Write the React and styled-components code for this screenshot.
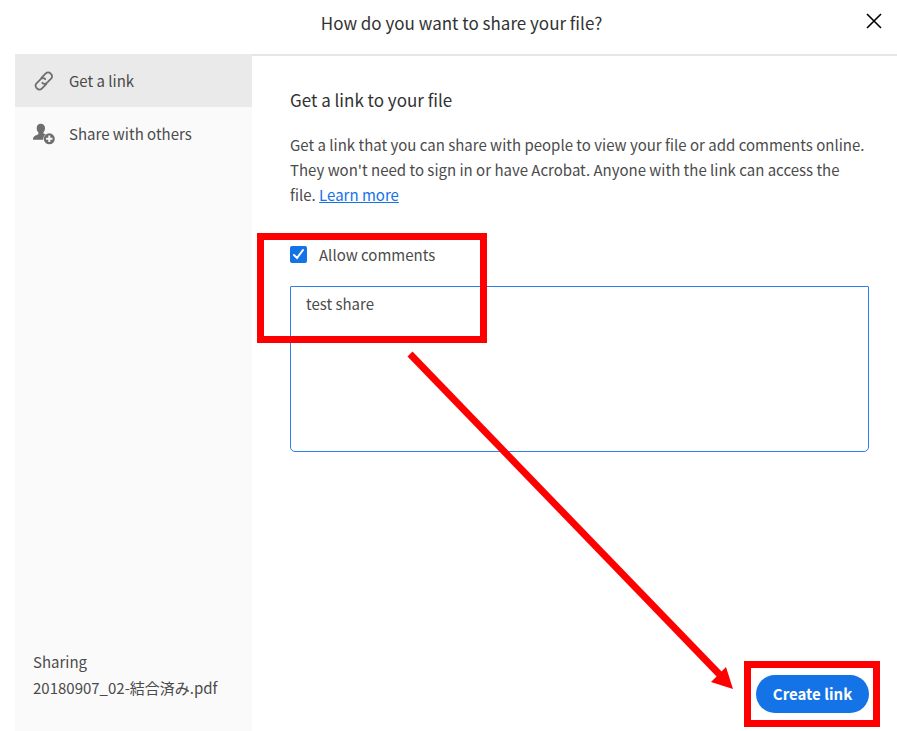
import React, { useState } from 'react';
import styled, { createGlobalStyle } from 'styled-components';

const GlobalStyle = createGlobalStyle`
    *, *::before, *::after {
        box-sizing: border-box;
    }
    body {
        margin: 0;
        background-color: #fff;
        color: #4b4b4b;
        font-family: "Noto Sans CJK JP", "Noto Sans", sans-serif;
        font-size: 15px;
        line-height: 25px;
    }
    button, textarea {
        font: inherit;
    }
`

const Dialog = styled.div`
    min-height: 100vh;
    padding-left: 15px;
    display: flex;
    flex-direction: column;
`

const Header = styled.header`
    height: 54px;
    padding: 0 11px 10px 0;
    display: grid;
    grid-template-columns: 46px 1fr 24px;
    align-items: center;
`

const Title = styled.h1`
    grid-column: 2;
    margin: 0;
    font-size: 17px;
    font-weight: 400;
    text-align: center;
    color: #323232;
`

const CloseButton = styled.button`
    width: 24px;
    height: 24px;
    padding: 0 0 2px;
    display: grid;
    place-items: center;
    border: 0;
    background: none;
    color: #000;
    cursor: pointer;
`

const Body = styled.div`
    flex: 1;
    display: flex;
`

const Sidebar = styled.aside`
    flex: 0 0 237px;
    padding-bottom: 30px;
    display: flex;
    flex-direction: column;
    justify-content: space-between;
    background-color: #fafafa;
`

const Menu = styled.nav`
    display: flex;
    flex-direction: column;
`

const MenuItem = styled.button`
    height: 53px;
    padding: 0 18px;
    display: flex;
    align-items: center;
    gap: 14px;
    border: 0;
    background-color: ${props => props.$active ? '#eaeaea' : 'transparent'};
    color: #4b4b4b;
    text-align: left;
    cursor: pointer;

    svg {
        color: #6e6e6e;
    }
`

const FileInfo = styled.div`
    padding: 0 18px;
    line-height: 26px;
`

const Main = styled.main`
    flex: 1;
    min-width: 0;
    padding: 31px 28px 18px 38px;
    display: flex;
    flex-direction: column;
    border-top: 2px solid #e6e6e6;
`

const Heading = styled.h2`
    margin: 0 0 20px;
    font-size: 17px;
    font-weight: 400;
    color: #323232;
`

const Description = styled.p`
    margin: 0 0 35px;
    padding-right: 3px;
`

const Link = styled.a`
    color: #1473e6;
    text-decoration: underline;
`

const Comments = styled.div`
    position: relative;
    display: flex;
    flex-direction: column;
    gap: 19px;
`

const CheckLabel = styled.label`
    display: flex;
    align-items: center;
    gap: 12px;
`

const Checkbox = styled.input`
    appearance: none;
    width: 17px;
    height: 17px;
    margin: 0;
    border: 2px solid #6e6e6e;
    border-radius: 2px;

    &:checked {
        border: 0;
        background: #1473e6 url("data:image/svg+xml,%3Csvg xmlns='http://www.w3.org/2000/svg' viewBox='0 0 17 17'%3E%3Cpath d='M4 9l3 3 6-8' fill='none' stroke='white' stroke-width='2' stroke-linecap='round'/%3E%3C/svg%3E");
    }
`

const Message = styled.textarea`
    width: 100%;
    height: 166px;
    padding: 4px 15px;
    display: block;
    resize: none;
    border: 1px solid #2c80e8;
    border-radius: 1px 1px 5px 5px;
    outline: 0;
    color: #4b4b4b;
`

const Footer = styled.footer`
    margin-top: auto;
    display: flex;
    justify-content: flex-end;
`

const CreateSpot = styled.div`
    position: relative;
`

const CreateButton = styled.button`
    min-width: 113px;
    height: 38px;
    padding: 0 16px 2px;
    border: 0;
    border-radius: 19px;
    background-color: #1473e6;
    color: #fff;
    font-weight: 700;
    white-space: nowrap;
    cursor: pointer;
`

// red marks drawn over the dialog
const CommentsMark = styled.div`
    position: absolute;
    top: -9px;
    left: -33px;
    width: 230px;
    height: 110px;
    border: 7px solid #f00;
    pointer-events: none;
`

const CreateMark = styled.div`
    position: absolute;
    inset: -14px -11px -14px -12px;
    border: 7px solid #f00;
    pointer-events: none;
`

const Arrow = styled.svg`
    position: absolute;
    right: 100%;
    bottom: 24px;
    margin-right: 23px;
    pointer-events: none;
`

const LinkIcon = () => (
    <svg width="22" height="22" viewBox="0 0 22 22" fill="none" stroke="currentColor" strokeWidth="1.8" strokeLinecap="round">
        <path d="M8.4 7.8l4.4-4.4a3.2 3.2 0 0 1 4.6 0l.7.7a3.2 3.2 0 0 1 0 4.6l-4.2 4.1a3.2 3.2 0 0 1-4.6 0" />
        <path d="M13.2 14.2l-4.4 4.4a3.2 3.2 0 0 1-4.6 0l-.7-.7a3.2 3.2 0 0 1 0-4.6l4.2-4.1a3.2 3.2 0 0 1 4.6 0" />
    </svg>
)

const ShareIcon = () => (
    <svg width="22" height="22" viewBox="0 0 22 22" fill="currentColor">
        <path d="M7.8.8C5.2.8 3.7 2.6 3.7 5.2c0 1.8.7 3.2 1.7 4.2v1.5C4.6 12 0 12.4 0 16v.8h10.2c0-2.6 1-4.6 2.6-5.6l-2.4-.6V9.2c1-1 1.6-2.3 1.6-4C12 2.6 10.4.8 7.8.8z" />
        <path fillRule="evenodd" d="M16.3 10.3a5.5 5.5 0 1 0 0 11 5.5 5.5 0 0 0 0-11zm-1 2.3h2v2.2h2.2v2h-2.2V19h-2v-2.2h-2.2v-2h2.2z" />
    </svg>
)

const CloseIcon = () => (
    <svg width="16" height="16" viewBox="0 0 16 16" stroke="currentColor" strokeWidth="1.6">
        <path d="M1 1l14 14M15 1L1 15" />
    </svg>
)

const App = () => {
    const [tab, setTab] = useState('link');
    const [allowComments, setAllowComments] = useState(true);
    const [message, setMessage] = useState('test share');

    return (
        <>
            <GlobalStyle />
            <Dialog>
                <Header>
                    <Title>How do you want to share your file?</Title>
                    <CloseButton aria-label="Close"><CloseIcon /></CloseButton>
                </Header>
                <Body>
                    <Sidebar>
                        <Menu>
                            <MenuItem $active={tab === 'link'} onClick={() => setTab('link')}>
                                <LinkIcon />
                                Get a link
                            </MenuItem>
                            <MenuItem $active={tab === 'others'} onClick={() => setTab('others')}>
                                <ShareIcon />
                                Share with others
                            </MenuItem>
                        </Menu>
                        <FileInfo>
                            <div>Sharing</div>
                            <div>20180907_02-結合済み.pdf</div>
                        </FileInfo>
                    </Sidebar>
                    <Main>
                        <Heading>Get a link to your file</Heading>
                        <Description>
                            Get a link that you can share with people to view your file or add comments online.
                            They won't need to sign in or have Acrobat. Anyone with the link can access the
                            file. <Link href="#learn-more">Learn more</Link>
                        </Description>
                        <Comments>
                            <CheckLabel>
                                <Checkbox
                                    type="checkbox"
                                    checked={allowComments}
                                    onChange={e => setAllowComments(e.target.checked)}
                                />
                                Allow comments
                            </CheckLabel>
                            <Message
                                aria-label="Message"
                                value={message}
                                onChange={e => setMessage(e.target.value)}
                            />
                            <CommentsMark />
                        </Comments>
                        <Footer>
                            <CreateSpot>
                                <CreateButton>Create link</CreateButton>
                                <Arrow width="326" height="338" viewBox="0 0 326 338">
                                    <path d="M3 3l312 323" stroke="#f00" strokeWidth="7" />
                                    <path d="M326 338l-7-22-15 15z" fill="#f00" />
                                </Arrow>
                                <CreateMark />
                            </CreateSpot>
                        </Footer>
                    </Main>
                </Body>
            </Dialog>
        </>
    );
}

export default App
